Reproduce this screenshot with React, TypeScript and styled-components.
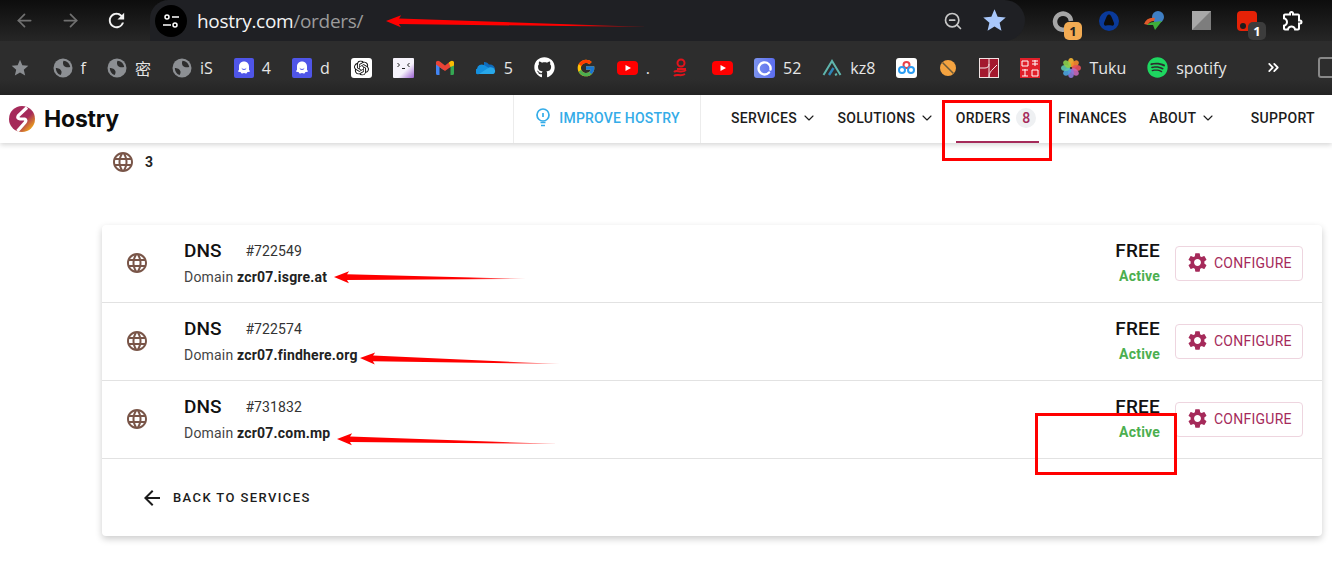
import styled, { createGlobalStyle } from "styled-components";
import { MdLanguage, MdSettings, MdArrowBack, MdStar, MdRefresh, MdOutlineExtension } from "react-icons/md";
import { SiOpenai } from "react-icons/si";
import { FaGithub, FaSpotify } from "react-icons/fa";
import { FcGoogle } from "react-icons/fc";
import { ArrowLeft, ArrowRight, ChevronDown, ChevronsRight, ZoomOut } from "lucide-react";

const GlobalStyle = createGlobalStyle`
  html, body {
    margin: 0;
    background: #fff;
    font-family: Roboto, "Liberation Sans", sans-serif;
  }
`;

const Page = styled.div`
  position: relative;
  width: 1332px;
  height: 582px;
  overflow: hidden;
`;

// browser chrome
const Toolbar = styled.div`
  height: 41px;
  display: flex;
  align-items: center;
  background: linear-gradient(#0d0d0d, #262626);
`;

const NavButtons = styled.div`
  width: 150px;
  display: flex;
  align-items: center;
  gap: 22px;
  padding-left: 12px;
  box-sizing: border-box;
`;

const ChromeButton = styled.span<{ $dim?: boolean }>`
  width: 24px;
  height: 24px;
  display: flex;
  align-items: center;
  justify-content: center;
  color: ${(p) => (p.$dim ? "#707070" : "#f2f2f2")};
`;

const UrlPill = styled.div`
  width: 875px;
  height: 41px;
  display: flex;
  align-items: center;
  padding: 0 17px 0 5px;
  box-sizing: border-box;
  background: #1f2024;
  border-radius: 20px 22px 22px 0;
`;

const SiteInfo = styled.span`
  width: 32px;
  height: 32px;
  flex: none;
  display: flex;
  align-items: center;
  justify-content: center;
  background: #000;
  border-radius: 50%;
`;

const UrlText = styled.div`
  margin-left: 10px;
  flex: 1;
  font: 400 19px "Open Sans", sans-serif;
  letter-spacing: -0.3px;
  color: #f4f4f4;
  & span {
    color: #9b9b9b;
  }
`;

const PillActions = styled.div`
  display: flex;
  align-items: center;
  gap: 18px;
  color: #c8c8c8;
`;

const Extensions = styled.div`
  flex: 1;
  display: flex;
  align-items: center;
  gap: 22px;
  padding-left: 26px;
`;

const ExtSlot = styled.span`
  position: relative;
  width: 24px;
  height: 24px;
  display: flex;
  align-items: center;
  justify-content: center;
  color: #fff;
`;

const ExtBadge = styled.span<{ $bg: string; $fg: string }>`
  position: absolute;
  right: -7px;
  bottom: -7px;
  width: 18px;
  height: 18px;
  border-radius: 5px;
  background: ${(p) => p.$bg};
  color: ${(p) => p.$fg};
  font: 700 13px/18px "Open Sans", sans-serif;
  text-align: center;
`;

const BookmarkBar = styled.div`
  height: 54px;
  display: flex;
  align-items: center;
  padding-left: 10px;
  padding-bottom: 1px;
  box-sizing: border-box;
  background: linear-gradient(#2d2d2d 70%, #242424);
  position: relative;
`;

const BarStar = styled.span`
  width: 20px;
  height: 20px;
  margin-right: 12px;
  color: #8b8e92;
  display: flex;
  align-items: center;
  justify-content: center;
`;

const Bookmark = styled.div`
  display: flex;
  align-items: center;
  gap: 8px;
  padding: 0 10.5px;
  font: 400 16px "Open Sans", "Noto Sans CJK SC", sans-serif;
  color: #e6e6e6;
  & > svg {
    flex: none;
  }
`;

const Overflow = styled.span`
  margin-left: 28px;
  color: #fff;
  display: flex;
`;

const BarDivider = styled.span`
  width: 2px;
  height: 20px;
  margin-left: 16px;
  background: #151515;
`;

const ClippedBox = styled.span`
  width: 14px;
  height: 17px;
  margin-left: 20px;
  flex: none;
  border: 2px solid #888;
  border-radius: 3px;
`;

// site header
const SiteHeader = styled.header`
  position: relative;
  height: 48px;
  display: flex;
  align-items: stretch;
  background: #fff;
  box-shadow: 0 2px 5px rgba(0, 0, 0, 0.16);
`;

const Brand = styled.div`
  display: flex;
  align-items: center;
  gap: 9px;
  padding-left: 9px;
  width: 513px;
  box-sizing: border-box;
  font: 700 23px Inter, sans-serif;
  letter-spacing: -0.2px;
  color: #0d0d0d;
`;

const Improve = styled.a`
  width: 188px;
  display: flex;
  align-items: center;
  justify-content: center;
  gap: 7px;
  padding-bottom: 2px;
  border-left: 1px solid #ececec;
  border-right: 1px solid #ececec;
  box-sizing: border-box;
  font-size: 14px;
  font-weight: 500;
  letter-spacing: 0.2px;
  color: #34ace8;
`;

const Menu = styled.nav`
  flex: 1;
  display: flex;
  gap: 20.5px;
  padding-left: 30px;
`;

const MenuItem = styled.a<{ $active?: boolean; $offset?: number }>`
  display: flex;
  align-items: center;
  gap: 4px;
  box-sizing: border-box;
  margin-left: ${(p) => p.$offset ?? 0}px;
  margin-right: ${(p) => (p.$active ? "-2px" : "0")};
  padding-right: ${(p) => (p.$active ? "3px" : "0")};
  border-bottom: 2px solid ${(p) => (p.$active ? "#a52a5a" : "transparent")};
  font-size: 14px;
  font-weight: 500;
  letter-spacing: 0.3px;
  color: #1c1c1c;
`;

const CountBadge = styled.span`
  width: 20px;
  height: 20px;
  margin-left: 2px;
  border-radius: 50%;
  background: #eef0f2;
  color: #a52a5a;
  font-size: 14px;
  line-height: 20px;
  text-align: center;
`;

// page content
const Summary = styled.div`
  display: flex;
  align-items: center;
  gap: 10px;
  height: 24px;
  margin: 7px 0 0 111px;
  font-size: 14px;
  font-weight: 700;
  color: #222;
`;

const Card = styled.section`
  width: 1220px;
  margin: 51px 0 0 102px;
  border-radius: 4px;
  background: #fff;
  box-shadow: 0 3px 7px rgba(0, 0, 0, 0.2);
`;

const Row = styled.div`
  height: 78px;
  display: flex;
  align-items: center;
  padding: 0 19px 0 23px;
  box-sizing: border-box;
  border-bottom: 1px solid #e2e2e2;
`;

const RowGlobe = styled(MdLanguage)`
  margin-bottom: 2px;
  color: #795548;
`;

const Info = styled.div`
  flex: 1;
  margin: 0 0 2px 35px;
`;

const TitleLine = styled.div`
  display: flex;
  align-items: center;
  gap: 24px;
  height: 24px;
`;

const Title = styled.span`
  font-size: 19px;
  font-weight: 500;
  color: #111;
`;

const OrderId = styled.span`
  font-size: 14px;
  letter-spacing: 0.1px;
  color: #333;
`;

const DomainLine = styled.div`
  margin-top: 4px;
  font-size: 14px;
  line-height: 20px;
  letter-spacing: 0.2px;
  color: #444;
  & b {
    font-weight: 700;
    color: #222;
  }
`;

const Billing = styled.div`
  margin-bottom: 2px;
  text-align: right;
`;

const Price = styled.div`
  font-size: 19px;
  line-height: 24px;
  font-weight: 500;
  letter-spacing: 0.2px;
  color: #111;
`;

const Status = styled.div`
  margin-top: 3px;
  font-size: 14px;
  line-height: 20px;
  font-weight: 700;
  letter-spacing: 0.2px;
  color: #4caf50;
`;

const ConfigureButton = styled.button`
  width: 128px;
  height: 35px;
  margin-left: 15px;
  display: flex;
  align-items: center;
  gap: 5px;
  padding: 0 0 2px 10px;
  box-sizing: border-box;
  background: #fff;
  border: 1px solid #eed5df;
  border-radius: 4px;
  font: 400 14px Roboto, sans-serif;
  letter-spacing: 0.25px;
  color: #a52a5a;
`;

const BackRow = styled.div`
  height: 77px;
  display: flex;
  align-items: center;
  gap: 9px;
  padding-left: 38px;
  font-size: 13px;
  font-weight: 500;
  letter-spacing: 1.4px;
  color: #1c1c1c;
`;

// red marks drawn on top of the screenshot
const OrdersMark = styled.div`
  position: absolute;
  left: 942px;
  top: 100px;
  width: 110px;
  height: 61px;
  box-sizing: border-box;
  border: 3px solid #f00;
`;

const ActiveMark = styled.div`
  position: absolute;
  left: 1035px;
  top: 413px;
  width: 142px;
  height: 62px;
  box-sizing: border-box;
  border: 3px solid #f00;
`;

const ArrowLayer = styled.svg`
  position: absolute;
  left: 0;
  top: 0;
  pointer-events: none;
`;

type Order = { id: string; domain: string };

const orders: Order[] = [
  { id: "#722549", domain: "zcr07.isgre.at" },
  { id: "#722574", domain: "zcr07.findhere.org" },
  { id: "#731832", domain: "zcr07.com.mp" },
];

const arrows = [
  { tipX: 386, tipY: 21, endX: 648, endY: 27 },
  { tipX: 334, tipY: 277, endX: 526, endY: 279 },
  { tipX: 360, tipY: 358, endX: 560, endY: 364 },
  { tipX: 337, tipY: 439, endX: 559, endY: 444 },
];

const arrowPoints = (a: (typeof arrows)[number]) => {
  const len = Math.hypot(a.endX - a.tipX, a.endY - a.tipY);
  const ux = (a.endX - a.tipX) / len;
  const uy = (a.endY - a.tipY) / len;
  const at = (along: number, side: number) =>
    `${a.tipX + ux * along - uy * side},${a.tipY + uy * along + ux * side}`;
  return [at(0, 0), at(15, -6), at(13, -2.8), at(len, 0), at(13, 2.8), at(15, 6)].join(" ");
};

const Globe = () => (
  <svg width="20" height="20" viewBox="0 0 20 20">
    <circle cx="10" cy="10" r="9.500" fill="#8c8f93" />
    <path d="M2.800 10C5 10 8 11 8.500 13.500 8.800 15 8 16.500 7.500 17 4.500 16 2.800 13 2.800 10z" fill="#2d2d2d" />
    <path d="M10.500 2.800C14 3 16.500 5.500 17.200 9 15 9.500 12.500 9.500 11 8 10 7 9.500 4.500 10.500 2.800z" fill="#2d2d2d" />
  </svg>
);

const Ghost = () => (
  <svg width="20" height="20" viewBox="0 0 20 20">
    <rect width="20" height="20" rx="2" fill="#4f55e8" />
    <path d="M10 3.500c-3 0-5 2.300-5 5v3.500c-1 .8-1.200 1.500-.5 1.800.8.200 1.300 0 2 .2.500 1 1 1.800 1.800 1.500.600-.2 1-.5 1.700-.5s1.100.3 1.700.5c.8.300 1.300-.5 1.800-1.500.7-.2 1.200 0 2-.2.700-.3.500-1-.5-1.800V8.500c0-2.700-2-5-5-5z" fill="#fff" />
    <path d="M7.800 10.500c1 1.300 3.400 1.300 4.400 0" stroke="#4f55e8" strokeWidth="1" fill="none" />
  </svg>
);

const OpenAiTile = () => (
  <svg width="21" height="20" viewBox="0 0 21 20">
    <rect width="21" height="20" rx="3" fill="#fff" />
    <SiOpenai x="3" y="2.500" size="15" color="#111" />
  </svg>
);

const FaceTile = () => (
  <svg width="21" height="20" viewBox="0 0 21 20">
    <defs>
      <linearGradient id="faceBg" x1="0" y1="0" x2="1" y2="1">
        <stop offset="0.6" stopColor="#f6f3fb" />
        <stop offset="1" stopColor="#9a5fd0" />
      </linearGradient>
    </defs>
    <rect width="21" height="20" rx="1" fill="url(#faceBg)" />
    <path d="M4.500 5l2 2-2 2M16.500 5l-2 2 2 2M9 10.500h3" stroke="#222" strokeWidth="1" fill="none" />
  </svg>
);

const Gmail = () => (
  <svg width="20" height="20" viewBox="0 0 20 20">
    <path d="M1 4.500l2.500-1L10 9l-1.500 3L4.500 9v8H2.500A1.500 1.500 0 0 1 1 15.500z" fill="#4285f4" />
    <path d="M19 4.500l-2.500-1L13 6.500l1 3 1.500-.5v8h2A1.500 1.500 0 0 0 19 15.500z" fill="#34a853" />
    <path d="M1 4.500C1 3 3 2 4.500 3.200L10 7.500l3.800-3 1.700 4.500-5.500 4-9-6.500z" fill="#ea4335" />
    <path d="M13.800 4.500l1.700-1.300C17 2 19 3 19 4.500v3l-3.500 1.500z" fill="#fbbc04" />
  </svg>
);

const OneDrive = () => (
  <svg width="20" height="20" viewBox="0 0 20 20">
    <path d="M8 4a5 5 0 0 1 5 2.500c3-.5 5.500 1 6 4.500H8z" fill="#0f6cbd" />
    <path d="M3 16a2.800 2.800 0 0 1-2-5.300A4.800 4.800 0 0 1 8 7l5 3-5 6z" fill="#1490df" />
    <path d="M3 16l10-6.500c2-.8 5-.2 6 2.500.5 2-.5 4-2 4z" fill="#28a8ea" />
  </svg>
);

const YouTube = () => (
  <svg width="21" height="20" viewBox="0 0 21 20">
    <rect x="0" y="3" width="21" height="14" rx="4" fill="#f00" />
    <path d="M8.500 7l5.500 3-5.500 3z" fill="#fff" />
  </svg>
);

const RedKnot = () => (
  <svg width="20" height="20" viewBox="0 0 20 20" fill="none" stroke="#e0141c" strokeWidth="2">
    <circle cx="10" cy="5" r="3.500" />
    <path d="M6 11h9M3 14c3-3 7 2 12-2M3 18c3-3 6 1 11-2" />
  </svg>
);

const RingTile = () => (
  <svg width="21" height="20" viewBox="0 0 21 20">
    <defs>
      <linearGradient id="ringBg" x1="0" y1="0" x2="1" y2="0">
        <stop offset="0" stopColor="#7c93ee" />
        <stop offset="1" stopColor="#5b6df0" />
      </linearGradient>
    </defs>
    <rect width="21" height="20" rx="3" fill="url(#ringBg)" />
    <path d="M15 14.500a6 6 0 1 1 1.500-3" stroke="#fff" strokeWidth="2.400" fill="none" strokeLinecap="round" />
  </svg>
);

const PeakIcon = () => (
  <svg width="20" height="20" viewBox="0 0 20 20" fill="none">
    <path d="M1.500 17L10 3l8.500 14" stroke="#5fb5ad" strokeWidth="2" />
    <path d="M7 17l4.500-7" stroke="#2d86b8" strokeWidth="2.400" />
    <path d="M13 17l2-1" stroke="#5fb5ad" strokeWidth="2" />
  </svg>
);

const CloudTile = () => (
  <svg width="21" height="20" viewBox="0 0 21 20">
    <rect width="21" height="20" rx="3" fill="#fff" />
    <g fill="none" strokeWidth="2">
      <circle cx="10.500" cy="7" r="3" stroke="#e8414a" />
      <circle cx="6" cy="12" r="3" stroke="#2a9df4" />
      <circle cx="15" cy="12" r="3" stroke="#2a9df4" />
    </g>
  </svg>
);

const OrangePill = () => (
  <svg width="20" height="20" viewBox="0 0 20 20">
    <circle cx="10" cy="10" r="8" fill="#f4a340" />
    <path d="M4.500 4.500l11 11" stroke="#6b5a3a" strokeWidth="1.500" />
  </svg>
);

const RedSquare = () => (
  <svg width="20" height="20" viewBox="0 0 20 20">
    <rect x="0.500" y="0.500" width="19" height="19" fill="#a3182e" stroke="#f1e3e3" />
    <path d="M10 1v18M1 10h5c3 0 4-2 4-4M10 19c0-4 2-6 4-8l4-4" stroke="#f5e8e8" strokeWidth="1" fill="none" />
  </svg>
);

const SealIcon = () => (
  <svg width="20" height="20" viewBox="0 0 20 20">
    <rect width="20" height="20" fill="#e0202a" />
    <path d="M2 3h6v5H2zM12 3h6M12 6h6M15 2v6M2 12h6M5 11v7M2 18h6M12 12h6v6h-6z" stroke="#fff" strokeWidth="1" fill="none" />
  </svg>
);

const PhotosIcon = () => {
  const colors = ["#f7b733", "#f58a2c", "#e8505b", "#c566b8", "#8a78d8", "#4aa3e0", "#5cc6b0", "#8ccf4d"];
  return (
    <svg width="20" height="22" viewBox="0 0 20 20">
      {colors.map((c, i) => (
        <ellipse key={c} cx="10" cy="4.500" rx="2.900" ry="4.500" fill={c} opacity="0.9" transform={`rotate(${i * 45} 10 10)`} />
      ))}
    </svg>
  );
};

const Logo = () => (
  <svg width="26" height="26" viewBox="0 0 26 26">
    <defs>
      <linearGradient id="logoFill" x1="0.300" y1="0.300" x2="0.900" y2="0.900">
        <stop offset="0.45" stopColor="#a52a5a" />
        <stop offset="1" stopColor="#f5b013" />
      </linearGradient>
    </defs>
    <circle cx="13" cy="13" r="13" fill="url(#logoFill)" />
    <path d="M18 1.500L9.500 9.500Q7.500 12.500 11 12.800L15.500 13Q18 14 16 16.500L8.500 25" fill="none" stroke="#fff" strokeWidth="3.200" />
  </svg>
);

const TuneIcon = () => (
  <svg width="20" height="20" viewBox="0 0 20 20" fill="none" stroke="#fff" strokeWidth="1.500">
    <circle cx="6" cy="6" r="2" />
    <path d="M11 6h7M2 14h8" />
    <circle cx="14" cy="14" r="2" />
  </svg>
);

const BulbIcon = () => (
  <svg width="18" height="20" viewBox="0 0 18 20" fill="none" stroke="#34ace8" strokeWidth="1.700">
    <circle cx="9" cy="7" r="6" />
    <path d="M9 5v4M6.500 14.500h5M7 17.500h4" />
  </svg>
);

const RingExt = () => (
  <svg width="22" height="22" viewBox="0 0 22 22" fill="none">
    <path d="M17 17a8 8 0 1 1 2-6" stroke="#a5a5a5" strokeWidth="4.500" />
  </svg>
);

const TriangleExt = () => (
  <svg width="22" height="22" viewBox="0 0 22 22">
    <circle cx="11" cy="11" r="10" fill="#0a3a9a" />
    <path d="M11 4.500c1.500 0 2 1.500 3 3.500l2 5c.5 2-1 3-2.500 2.500-1.500-.5-3.500-.5-5 0C7 16 5.500 15 6 13l2-5c1-2 1.500-3.500 3-3.500z" fill="#0d0d0d" />
  </svg>
);

const IdmExt = () => (
  <svg width="24" height="22" viewBox="0 0 24 22">
    <circle cx="15" cy="7" r="6" fill="#3f7fc4" />
    <path d="M1 14c2-5 6-7 11-6l-1 3c-3 0-5 1-6 4z" fill="#e05a2a" />
    <path d="M4 15c2-2 4-3 7-3l8-1-7 9-2-5c-2 0-4 0-6 0z" fill="#3fae3a" />
  </svg>
);

const GreySquareExt = () => (
  <svg width="19" height="19" viewBox="0 0 19 19">
    <rect width="19" height="19" fill="#a8a8a8" />
    <path d="M19 0v19H0z" fill="#7d7d7d" />
  </svg>
);

const RedExt = () => (
  <svg width="20" height="20" viewBox="0 0 20 20">
    <rect width="20" height="20" rx="4" fill="#e52207" />
    <circle cx="6" cy="15" r="3" fill="#1c1c1c" />
  </svg>
);

function App() {
  return (
    <Page>
      <GlobalStyle />
      <Toolbar>
        <NavButtons>
          <ChromeButton $dim>
            <ArrowLeft size={21} />
          </ChromeButton>
          <ChromeButton $dim>
            <ArrowRight size={21} />
          </ChromeButton>
          <ChromeButton>
            <MdRefresh size={23} />
          </ChromeButton>
        </NavButtons>
        <UrlPill>
          <SiteInfo>
            <TuneIcon />
          </SiteInfo>
          <UrlText>
            hostry.com<span>/orders/</span>
          </UrlText>
          <PillActions>
            <ZoomOut size={20} />
            <MdStar size={27} color="#a8c7fa" />
          </PillActions>
        </UrlPill>
        <Extensions>
          <ExtSlot>
            <RingExt />
            <ExtBadge $bg="#f2ab53" $fg="#222">1</ExtBadge>
          </ExtSlot>
          <ExtSlot>
            <TriangleExt />
          </ExtSlot>
          <ExtSlot>
            <IdmExt />
          </ExtSlot>
          <ExtSlot>
            <GreySquareExt />
          </ExtSlot>
          <ExtSlot>
            <RedExt />
            <ExtBadge $bg="#3c3c3c" $fg="#fff">1</ExtBadge>
          </ExtSlot>
          <ExtSlot>
            <MdOutlineExtension size={25} />
          </ExtSlot>
        </Extensions>
      </Toolbar>

      <BookmarkBar>
        <BarStar>
          <MdStar size={24} />
        </BarStar>
        <Bookmark><Globe />f</Bookmark>
        <Bookmark><Globe />密</Bookmark>
        <Bookmark><Globe />iS</Bookmark>
        <Bookmark><Ghost />4</Bookmark>
        <Bookmark><Ghost />d</Bookmark>
        <Bookmark><OpenAiTile /></Bookmark>
        <Bookmark><FaceTile /></Bookmark>
        <Bookmark><Gmail /></Bookmark>
        <Bookmark><OneDrive />5</Bookmark>
        <Bookmark><FaGithub size={21} color="#fff" /></Bookmark>
        <Bookmark><FcGoogle size={20} /></Bookmark>
        <Bookmark><YouTube />.</Bookmark>
        <Bookmark><RedKnot /></Bookmark>
        <Bookmark><YouTube /></Bookmark>
        <Bookmark><RingTile />52</Bookmark>
        <Bookmark><PeakIcon />kz8</Bookmark>
        <Bookmark><CloudTile /></Bookmark>
        <Bookmark><OrangePill /></Bookmark>
        <Bookmark><RedSquare /></Bookmark>
        <Bookmark><SealIcon /></Bookmark>
        <Bookmark><PhotosIcon />Tuku</Bookmark>
        <Bookmark><FaSpotify size={21} color="#1ed760" />spotify</Bookmark>
        <Overflow>
          <ChevronsRight size={17} strokeWidth={2.5} />
        </Overflow>
        <BarDivider />
        <ClippedBox />
      </BookmarkBar>

      <SiteHeader>
        <Brand>
          <Logo />
          Hostry
        </Brand>
        <Improve>
          <BulbIcon />
          IMPROVE HOSTRY
        </Improve>
        <Menu>
          <MenuItem>SERVICES <ChevronDown size={16} strokeWidth={1.7} /></MenuItem>
          <MenuItem>SOLUTIONS <ChevronDown size={16} strokeWidth={1.7} /></MenuItem>
          <MenuItem $active>ORDERS <CountBadge>8</CountBadge></MenuItem>
          <MenuItem>FINANCES</MenuItem>
          <MenuItem $offset={2}>ABOUT <ChevronDown size={16} strokeWidth={1.7} /></MenuItem>
          <MenuItem $offset={14}>SUPPORT</MenuItem>
        </Menu>
      </SiteHeader>

      <Summary>
        <MdLanguage size={24} color="#795548" />
        3
      </Summary>

      <Card>
        {orders.map((order) => (
          <Row key={order.id}>
            <RowGlobe size={24} />
            <Info>
              <TitleLine>
                <Title>DNS</Title>
                <OrderId>{order.id}</OrderId>
              </TitleLine>
              <DomainLine>
                Domain <b>{order.domain}</b>
              </DomainLine>
            </Info>
            <Billing>
              <Price>FREE</Price>
              <Status>Active</Status>
            </Billing>
            <ConfigureButton>
              <MdSettings size={23} />
              CONFIGURE
            </ConfigureButton>
          </Row>
        ))}
        <BackRow>
          <MdArrowBack size={24} />
          BACK TO SERVICES
        </BackRow>
      </Card>

      <OrdersMark />
      <ActiveMark />
      <ArrowLayer width="1332" height="582">
        <defs>
          <linearGradient id="arrowFade" x1="0" y1="0" x2="1" y2="0">
            <stop offset="0.7" stopColor="#f00" />
            <stop offset="1" stopColor="#f00" stopOpacity="0.35" />
          </linearGradient>
        </defs>
        {arrows.map((a) => (
          <polygon key={a.tipX} points={arrowPoints(a)} fill="url(#arrowFade)" />
        ))}
      </ArrowLayer>
    </Page>
  );
}

export default App;
